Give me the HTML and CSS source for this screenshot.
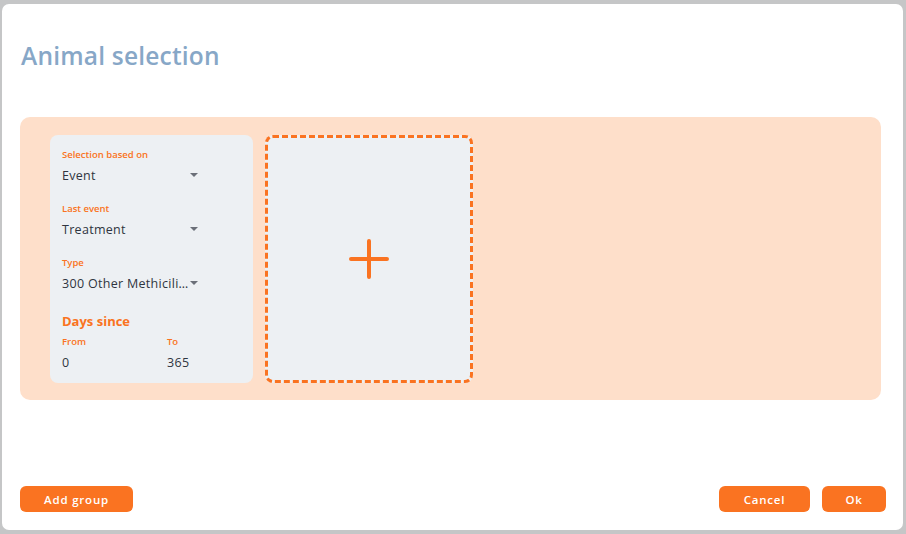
FILE: index.html
```html
<!DOCTYPE html>
<html lang="en">
<head>
<meta charset="utf-8">
<title>Animal selection</title>
<link rel="stylesheet" href="styles.css">
</head>
<body>
<div class="dialog">
  <h1 class="title">Animal selection</h1>
  <div class="panel">
    <div class="card">
      <div class="field">
        <div class="label">Selection based on</div>
        <div class="select"><span class="value">Event</span><span class="caret"></span></div>
      </div>
      <div class="field">
        <div class="label">Last event</div>
        <div class="select"><span class="value">Treatment</span><span class="caret"></span></div>
      </div>
      <div class="field">
        <div class="label">Type</div>
        <div class="select"><span class="value">300 Other Methicili…</span><span class="caret"></span></div>
      </div>
      <div class="section">Days since</div>
      <div class="range">
        <div class="col">
          <div class="label">From</div>
          <div class="num">0</div>
        </div>
        <div class="col">
          <div class="label">To</div>
          <div class="num">365</div>
        </div>
      </div>
    </div>
    <div class="add-box">
      <svg class="plus" width="40" height="40" viewBox="0 0 40 40"><path d="M20 2V38M2 20H38" stroke="#fa7321" stroke-width="4" stroke-linecap="round" fill="none"/></svg>
    </div>
  </div>
  <div class="footer">
    <button class="btn btn-wide">Add group</button>
    <div class="actions">
      <button class="btn btn-cancel">Cancel</button>
      <button class="btn btn-ok">Ok</button>
    </div>
  </div>
</div>
</body>
</html>
```
FILE: styles.css
```css
* { box-sizing: border-box; }
html, body { margin: 0; padding: 0; }
body {
  width: 906px;
  height: 534px;
  background: #c5c6c7;
  padding: 4px 3px 4px 2px;
  font-family: "Open Sans", "Noto Sans", sans-serif;
  overflow: hidden;
}
.dialog {
  width: 901px;
  height: 526px;
  background: #ffffff;
  border-radius: 7px;
  padding: 0 22px 0 18px;
  display: flex;
  flex-direction: column;
}
.title {
  margin: 36px 0 0 1px;
  font-size: 24.5px;
  line-height: 32px;
  font-weight: 600;
  color: #87a7c7;
  letter-spacing: 0.2px;
}
.panel {
  margin-top: 45px;
  height: 283px;
  background: #fedfca;
  border-radius: 10px;
  padding: 18px 30px;
  display: flex;
  gap: 12px;
}
.card {
  width: 203px;
  height: 248px;
  background: #edf0f3;
  border-radius: 8px;
  padding: 13px 12px 0 12px;
}
.field { height: 54px; }
.label {
  font-size: 9.5px;
  line-height: 14px;
  font-weight: 600;
  color: #fa7321;
}
.select {
  width: 136px;
  height: 24px;
  padding-top: 2px;
  display: flex;
  align-items: center;
  justify-content: space-between;
}
.value {
  font-size: 12.5px;
  letter-spacing: 0.3px;
  color: #2f3540;
  white-space: nowrap;
  flex: 1;
  min-width: 0;
}
.caret {
  width: 0; height: 0;
  border-left: 4px solid transparent;
  border-right: 4px solid transparent;
  border-top: 4px solid #6b6f78;
  flex: none;
}
.section {
  font-size: 13px;
  line-height: 22px;
  font-weight: 700;
  color: #fa7321;
  margin-bottom: 3px;
}
.range { display: flex; }
.col { width: 105px; flex: none; }
.col + .col { width: auto; flex: 1; }
.num {
  font-size: 12.5px;
  letter-spacing: 0.3px;
  line-height: 22px;
  padding-top: 3px;
  color: #2f3540;
}
.add-box {
  width: 208px;
  height: 248px;
  border: 3px dashed #fa7321;
  border-radius: 8px;
  background: #edf0f3;
  display: flex;
  align-items: center;
  justify-content: center;
}
.footer {
  margin-top: auto;
  margin-bottom: 18px;
  margin-right: -5px;
  display: flex;
  justify-content: space-between;
}
.actions { display: flex; gap: 12px; }
.btn {
  height: 26px;
  border: none;
  border-radius: 6px;
  background: #fa7321;
  color: #ffffff;
  font-family: "Open Sans", "Noto Sans", sans-serif;
  font-size: 11.5px;
  font-weight: 600;
  letter-spacing: 0.8px;
  padding: 0;
}
.btn-wide { width: 113px; }
.btn-cancel { width: 91px; }
.btn-ok { width: 64px; }
```
